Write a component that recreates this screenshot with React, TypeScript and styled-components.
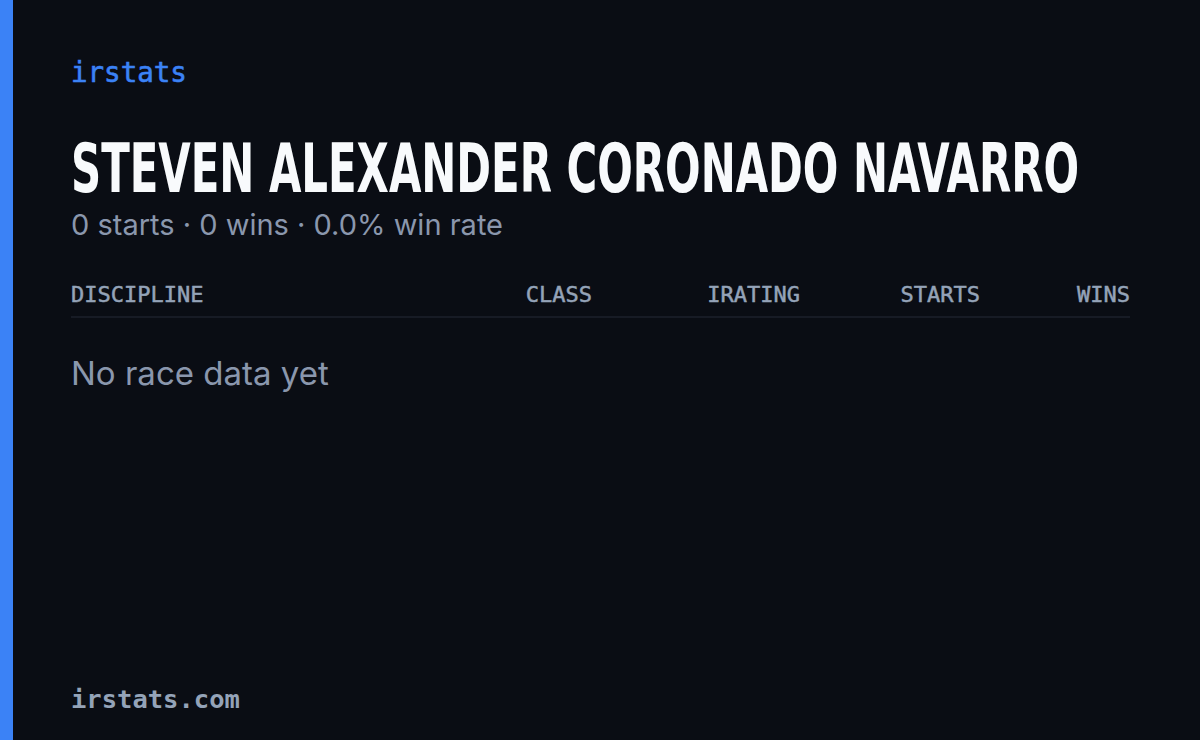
import { useLayoutEffect, useRef, useState } from "react";
import styled, { createGlobalStyle } from "styled-components";

const GlobalStyle = createGlobalStyle`
  html, body {
    margin: 0;
    padding: 0;
    background: #0a0d14;
  }
  * {
    box-sizing: border-box;
  }
`;

const mono = `"DejaVu Sans Mono", "Liberation Mono", monospace`;
const sans = `Inter, "Noto Sans", sans-serif`;

const NAME_WIDTH = 1008;

const Card = styled.div`
  width: 1200px;
  height: 740px;
  background: #0a0d14;
  border-left: 13px solid #3b82f6;
  padding: 54px 70px 26px 58px;
  display: flex;
  flex-direction: column;
  overflow: hidden;
`;

const Brand = styled.div`
  font-family: ${mono};
  font-size: 27.5px;
  color: #3b82f6;
  line-height: 36px;
  -webkit-text-stroke: 0.6px currentColor;
`;

const Name = styled.h1`
  margin: 41px 0 0;
  height: 76px;
  font-family: "DejaVu Sans Condensed", "DejaVu Sans", sans-serif;
  font-stretch: condensed;
  font-weight: 700;
  font-size: 68px;
  line-height: 76px;
  color: #f8fafc;
  white-space: nowrap;
`;

const NameText = styled.span`
  display: inline-block;
  transform-origin: left center;
`;

const Summary = styled.div`
  font-family: ${sans};
  font-size: 29px;
  line-height: 36px;
  color: #8a97ad;
`;

const Table = styled.div`
  margin-top: 29px;
  display: flex;
  flex-direction: column;
`;

const HeadRow = styled.div`
  display: flex;
  align-items: center;
  height: 46px;
  border-bottom: 2px solid #171b25;
  font-family: ${mono};
  font-size: 22px;
  color: #94a3b8;
  -webkit-text-stroke: 0.5px currentColor;
`;

const Col = styled.div<{ $w?: number }>`
  flex: ${({ $w }) => ($w ? `0 0 ${$w}px` : "1")};
  text-align: ${({ $w }) => ($w ? "right" : "left")};
`;

const Empty = styled.div`
  margin-top: 35px;
  font-family: ${sans};
  font-size: 33px;
  color: #8a97ad;
`;

const Footer = styled.div`
  margin-top: auto;
  font-family: ${mono};
  font-size: 25.5px;
  font-weight: 700;
  color: #94a3b8;
`;

const columns = [
  { label: "CLASS", w: 120 },
  { label: "IRATING", w: 208 },
  { label: "STARTS", w: 180 },
  { label: "WINS", w: 150 },
];

export default function App() {
  const nameRef = useRef<HTMLSpanElement>(null);
  const [scale, setScale] = useState(1);

  // squeeze the name to the condensed width of the card headline
  useLayoutEffect(() => {
    const el = nameRef.current;
    if (el && el.offsetWidth > 0) {
      setScale(NAME_WIDTH / el.offsetWidth);
    }
  }, []);

  return (
    <>
      <GlobalStyle />
      <Card>
        <Brand>irstats</Brand>
        <Name>
          <NameText ref={nameRef} style={{ transform: `scaleX(${scale})` }}>
            STEVEN ALEXANDER CORONADO NAVARRO
          </NameText>
        </Name>
        <Summary>0 starts · 0 wins · 0.0% win rate</Summary>
        <Table>
          <HeadRow>
            <Col>DISCIPLINE</Col>
            {columns.map((c) => (
              <Col key={c.label} $w={c.w}>
                {c.label}
              </Col>
            ))}
          </HeadRow>
          <Empty>No race data yet</Empty>
        </Table>
        <Footer>irstats.com</Footer>
      </Card>
    </>
  );
}
